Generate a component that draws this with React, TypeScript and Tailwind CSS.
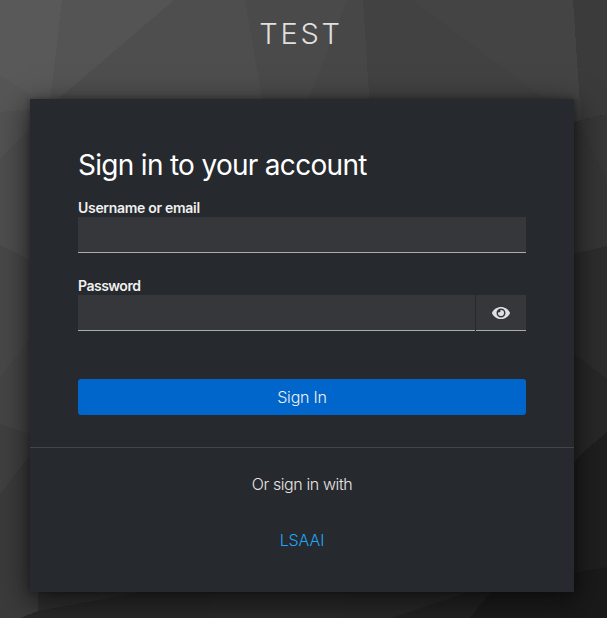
function Backdrop() {
  return (
    <svg className="absolute inset-0 -z-10 h-full w-full" viewBox="0 0 607 618" preserveAspectRatio="none" shapeRendering="crispEdges" aria-hidden="true">
      <rect width="607" height="618" fill="#2a2a2a" />
      <path d="M0 0H62L50 113H0Z" fill="#595959" />
      <path d="M0 75L30 94V113H0Z" fill="#565656" />
      <path d="M62 0H174L58 99V110H49Z" fill="#545454" />
      <path d="M174 0H245L264 110H45L58 99Z" fill="#4e4e4e" />
      <path d="M245 0H347L304 110H264Z" fill="#4a4a4a" />
      <path d="M347 0H363L370 110H304Z" fill="#474747" />
      <path d="M363 0H413L560 110H370Z" fill="#424242" />
      <path d="M413 0H573L581 110H560Z" fill="#444444" />
      <path d="M573 0H607V114L581 120Z" fill="#3b3b3b" />
      <path d="M560 99H581V122H560Z" fill="#404040" />
      <path d="M0 112L40 108V118L0 159Z" fill="#525252" />
      <path d="M0 159L40 118V265L0 245Z" fill="#4e4e4e" />
      <path d="M0 245L40 265V326L0 377Z" fill="#484848" />
      <path d="M0 377L40 326V437L0 424Z" fill="#454545" />
      <path d="M0 424L40 437V442L0 494Z" fill="#404040" />
      <path d="M0 494L40 442V618H0Z" fill="#3b3b3b" />
      <path d="M560 125L607 114V246L560 257Z" fill="#353535" />
      <path d="M579 122L607 114V180Z" fill="#373737" />
      <path d="M560 257L607 246V379L560 343Z" fill="#2d2d2d" />
      <path d="M560 343L607 379V432L580 455L560 480Z" fill="#282828" />
      <path d="M560 480L580 455L607 432V567L560 575Z" fill="#1f1f1f" />
      <path d="M38 611L150 590V580H38Z" fill="#303030" />
      <path d="M20 618L38 611L210 580H607V618Z" fill="#292929" />
      <path d="M215 580L209 618H343L346 580Z" fill="#2a2a2a" />
      <path d="M390 618L490 585V618Z" fill="#232323" />
      <path d="M470 618L500 580H607V618Z" fill="#1c1c1c" />
      <path d="M560 575L607 567V618H560Z" fill="#1a1a1a" />
    </svg>
  );
}

function EyeIcon() {
  return (
    <svg viewBox="0 0 576 512" className="h-4 w-[18px]" fill="#e0e0e0" aria-hidden="true">
      <path d="M572.52 241.4C518.29 135.59 410.93 64 288 64S57.68 135.64 3.48 241.41a32.35 32.35 0 0 0 0 29.19C57.71 376.41 165.07 448 288 448s230.32-71.64 284.52-177.41a32.35 32.35 0 0 0 0-29.19zM288 400a144 144 0 1 1 144-144 143.93 143.93 0 0 1-144 144zm0-240a95.31 95.31 0 0 0-25.31 3.79 47.85 47.85 0 0 1-66.9 66.9A95.78 95.78 0 1 0 288 160z" />
    </svg>
  );
}

const field = "block h-9 border-b border-[#aaabac] bg-[#36373a] outline-none";
const label = "block h-[18px] whitespace-nowrap text-sm leading-[18px] font-semibold text-[#f0f0f0]";

export default function App() {
  return (
    <div className="relative isolate h-[618px] w-full overflow-hidden px-[30px] font-[Inter,sans-serif]">
      <Backdrop />
      <header className="flex h-[99px] justify-center pt-[16px] pr-[5px]">
        <div className="h-9 text-[29px] leading-9 font-light tracking-[2.8px] text-[#e0e0e0]">TEST</div>
      </header>
      <main className="h-[493px] w-[544px] bg-[#26292d] shadow-[0_8px_28px_2px_rgba(3,3,3,0.6),0_0_6px_0_rgba(3,3,3,0.32)]">
        <form className="h-[348px] px-12 pt-[48px]" onSubmit={(e) => e.preventDefault()}>
          <h1 className="h-[52px] whitespace-nowrap text-[28px] leading-[36px] font-normal tracking-[-0.7px] text-white">Sign in to your account</h1>
          <label htmlFor="username" className={label + " tracking-[-0.3px]"}>Username or email</label>
          <input id="username" className={field + " w-full"} />
          <label htmlFor="password" className={label + " mt-6 tracking-[-0.5px]"}>Password</label>
          <div className="flex gap-px">
            <input id="password" type="password" className={field + " w-[397px]"} />
            <button type="button" aria-label="Show password" className="flex h-9 w-[50px] items-center justify-center border-b border-[#aaabac] bg-[#36373a]">
              <EyeIcon />
            </button>
          </div>
          <button type="submit" className="mt-12 block h-9 w-full rounded-[3px] bg-[#0066cc] text-base leading-9 font-light tracking-[-0.2px] text-[#f0f0f0]">Sign In</button>
        </form>
        <section className="h-[145px] border-t border-[#444548] pt-[24px] text-center text-base leading-6 font-light">
          <h2 className="tracking-[-0.4px] text-[#e6e6e6]">Or sign in with</h2>
          <a href="#" className="mt-8 inline-block tracking-[-0.1px] text-[#1fa7f8]">LSAAI</a>
        </section>
      </main>
    </div>
  );
}
